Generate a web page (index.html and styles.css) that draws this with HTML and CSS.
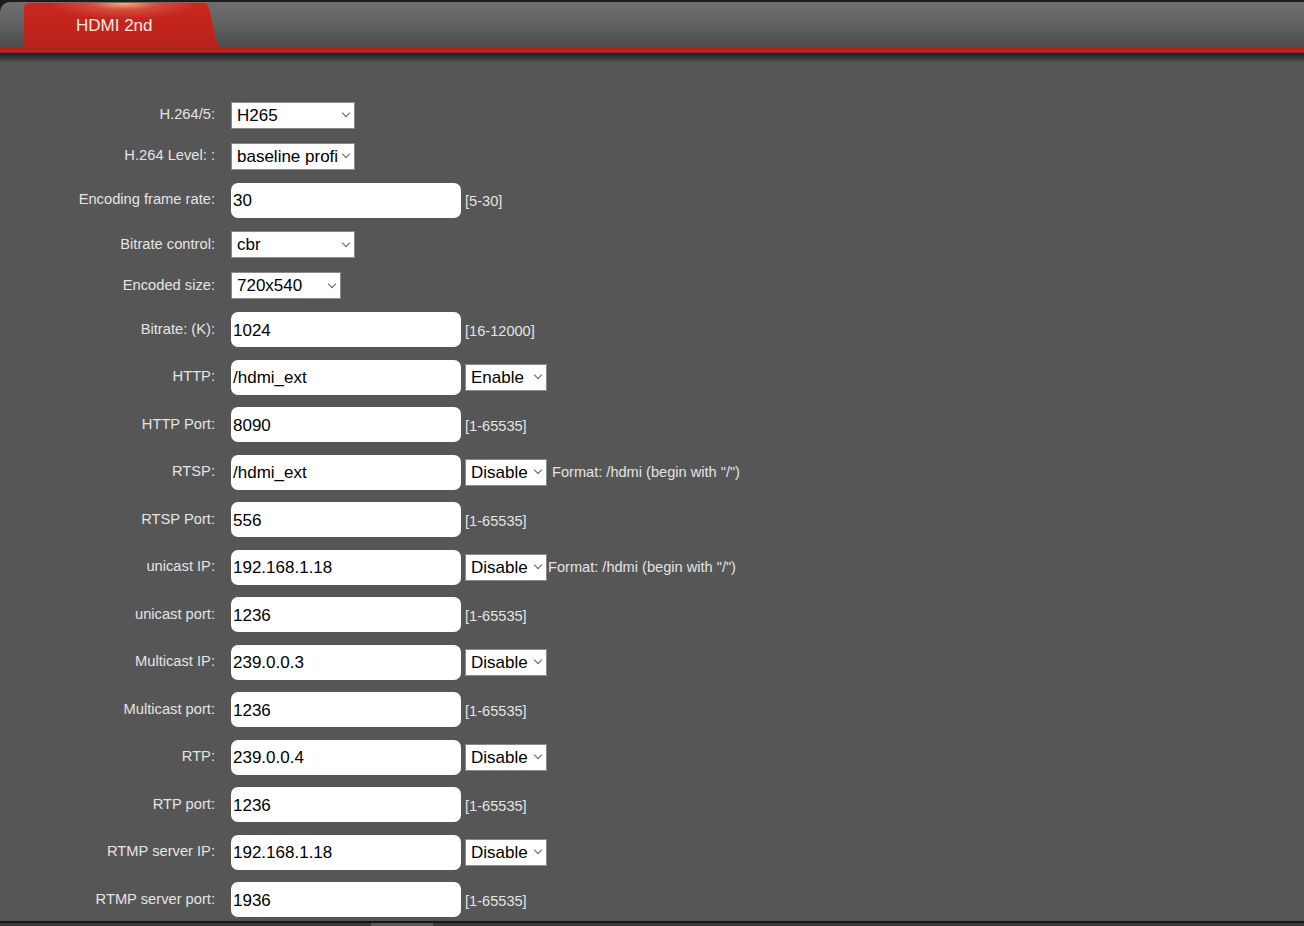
FILE: index.html
```html
<!DOCTYPE html>
<html>
<head>
<meta charset="utf-8">
<title>HDMI 2nd</title>
<link rel="stylesheet" href="styles.css">
</head>
<body>
<div class="page">
  <div class="header">
    <div class="bar">
      <div class="tab">HDMI 2nd</div>
    </div>
    <div class="redline"></div>
    <div class="shadow"></div>
  </div>

  <form class="form">
    <div class="row short">
      <label class="lbl">H.264/5:</label>
      <div class="ctl"><span class="sel w124"><select><option>H265</option></select></span></div>
    </div>
    <div class="row short">
      <label class="lbl">H.264 Level: :</label>
      <div class="ctl"><span class="sel w124"><select><option>baseline profile</option></select></span></div>
    </div>
    <div class="row">
      <label class="lbl">Encoding frame rate:</label>
      <div class="ctl"><input class="txt" value="30"><span class="hint">[5-30]</span></div>
    </div>
    <div class="row short">
      <label class="lbl">Bitrate control:</label>
      <div class="ctl"><span class="sel w124"><select><option>cbr</option></select></span></div>
    </div>
    <div class="row short">
      <label class="lbl">Encoded size:</label>
      <div class="ctl"><span class="sel w110"><select><option>720x540</option></select></span></div>
    </div>
    <div class="row">
      <label class="lbl">Bitrate: (K):</label>
      <div class="ctl"><input class="txt" value="1024"><span class="hint">[16-12000]</span></div>
    </div>
    <div class="row">
      <label class="lbl">HTTP:</label>
      <div class="ctl"><input class="txt" value="/hdmi_ext"><span class="sel w82 after"><select><option>Enable</option></select></span></div>
    </div>
    <div class="row">
      <label class="lbl">HTTP Port:</label>
      <div class="ctl"><input class="txt" value="8090"><span class="hint">[1-65535]</span></div>
    </div>
    <div class="row">
      <label class="lbl">RTSP:</label>
      <div class="ctl"><input class="txt" value="/hdmi_ext"><span class="sel w82 after"><select><option>Disable</option></select></span><span class="note">Format: /hdmi (begin with "/")</span></div>
    </div>
    <div class="row">
      <label class="lbl">RTSP Port:</label>
      <div class="ctl"><input class="txt" value="556"><span class="hint">[1-65535]</span></div>
    </div>
    <div class="row">
      <label class="lbl">unicast IP:</label>
      <div class="ctl"><input class="txt" value="192.168.1.18"><span class="sel w82 after"><select><option>Disable</option></select></span><span class="note tight">Format: /hdmi (begin with "/")</span></div>
    </div>
    <div class="row">
      <label class="lbl">unicast port:</label>
      <div class="ctl"><input class="txt" value="1236"><span class="hint">[1-65535]</span></div>
    </div>
    <div class="row">
      <label class="lbl">Multicast IP:</label>
      <div class="ctl"><input class="txt" value="239.0.0.3"><span class="sel w82 after"><select><option>Disable</option></select></span></div>
    </div>
    <div class="row">
      <label class="lbl">Multicast port:</label>
      <div class="ctl"><input class="txt" value="1236"><span class="hint">[1-65535]</span></div>
    </div>
    <div class="row">
      <label class="lbl">RTP:</label>
      <div class="ctl"><input class="txt" value="239.0.0.4"><span class="sel w82 after"><select><option>Disable</option></select></span></div>
    </div>
    <div class="row">
      <label class="lbl">RTP port:</label>
      <div class="ctl"><input class="txt" value="1236"><span class="hint">[1-65535]</span></div>
    </div>
    <div class="row">
      <label class="lbl">RTMP server IP:</label>
      <div class="ctl"><input class="txt" value="192.168.1.18"><span class="sel w82 after"><select><option>Disable</option></select></span></div>
    </div>
    <div class="row">
      <label class="lbl">RTMP server port:</label>
      <div class="ctl"><input class="txt" value="1936"><span class="hint">[1-65535]</span></div>
    </div>
  </form>

  <div class="bottom"><div class="thumb"></div></div>
</div>
</body>
</html>
```

FILE: styles.css
```css
html, body {
  margin: 0;
  padding: 0;
  background: #565656;
}
body {
  font-family: "Liberation Sans", Arial, sans-serif;
}
.page {
  height: 100vh;
  display: flex;
  flex-direction: column;
  overflow: hidden;
}
.header {
  flex: none;
  background: #1c1c1c;
  padding-top: 2px;
}
.bar {
  height: 46px;
  display: flex;
  align-items: flex-end;
  padding-left: 24px;
  border-top-left-radius: 10px;
  background: linear-gradient(to bottom, #6f6f6f 0%, #636363 45%, #4b4b4b 100%);
}
.tab {
  width: 200px;
  height: 45px;
  box-sizing: border-box;
  padding: 13px 0 0 52px;
  line-height: 20px;
  font-size: 17px;
  color: #fde9e2;
  clip-path: path("M0,45 L0,6 Q0,0 6,0 L179,0 Q184,0 185,5 L192,37 Q194,45 200,45 Z");
  background:
    radial-gradient(ellipse 75px 16px at 100px 0px, rgba(245, 200, 160, 0.85) 0%, rgba(225, 120, 90, 0.45) 45%, rgba(200, 40, 30, 0) 100%),
    linear-gradient(to bottom, #c8281f 0%, #c0241d 60%, #b8221c 100%);
}
.redline {
  height: 5px;
  background: linear-gradient(to bottom, #a8201b, #c0261f 50%, #a01f1a);
}
.shadow {
  height: 10px;
  background: linear-gradient(to bottom, #1c1c1c 0%, #333 40%, #565656 100%);
}
.form {
  flex: 1;
  padding-top: 31.5px;
  overflow: hidden;
}
.row {
  height: 47.5px;
  display: grid;
  grid-template-columns: 215px 1fr;
  column-gap: 16px;
  align-items: center;
}
.row.short {
  height: 41px;
}
.lbl {
  text-align: right;
  font-size: 14.7px;
  color: #e4e4e4;
  white-space: nowrap;
  padding-bottom: 2px;
}
.ctl {
  display: flex;
  align-items: center;
}
.txt {
  width: 230px;
  height: 35px;
  box-sizing: border-box;
  border: none;
  border-radius: 7px;
  padding: 2px 2px 0;
  margin: 0;
  font-family: "Liberation Sans", Arial, sans-serif;
  font-size: 17px;
  color: #000;
  background: #fff;
  outline: none;
}
.sel {
  position: relative;
  display: inline-block;
  height: 27px;
}
.sel select {
  appearance: none;
  -webkit-appearance: none;
  width: 100%;
  height: 100%;
  box-sizing: border-box;
  margin: 0;
  border: 1px solid #8a8a8a;
  border-radius: 0;
  background: #fff;
  padding: 0 15px 0 5px;
  font-family: "Liberation Sans", Arial, sans-serif;
  font-size: 17px;
  color: #000;
  outline: none;
}
.sel::after {
  content: "";
  position: absolute;
  right: 6px;
  top: 50%;
  width: 5px;
  height: 5px;
  margin-top: -5px;
  border-right: 1px solid #606060;
  border-bottom: 1px solid #606060;
  transform: rotate(45deg);
  pointer-events: none;
}
.w124 { width: 124px; }
.w110 { width: 110px; }
.w82 { width: 82px; }
.after { margin-left: 4px; }
.hint {
  margin-left: 4px;
  padding-top: 2px;
  font-size: 14.6px;
  color: #e4e4e4;
}
.note {
  margin-left: 5px;
  font-size: 14.6px;
  color: #e4e4e4;
}
.note.tight {
  margin-left: 1px;
}
.bottom {
  flex: none;
  height: 3px;
  border-top: 2px solid #161616;
  background: #3a3a3a;
  position: relative;
}
.thumb {
  position: absolute;
  left: 371px;
  top: 0;
  width: 62px;
  height: 3px;
  background: #5a5a5a;
}
```
